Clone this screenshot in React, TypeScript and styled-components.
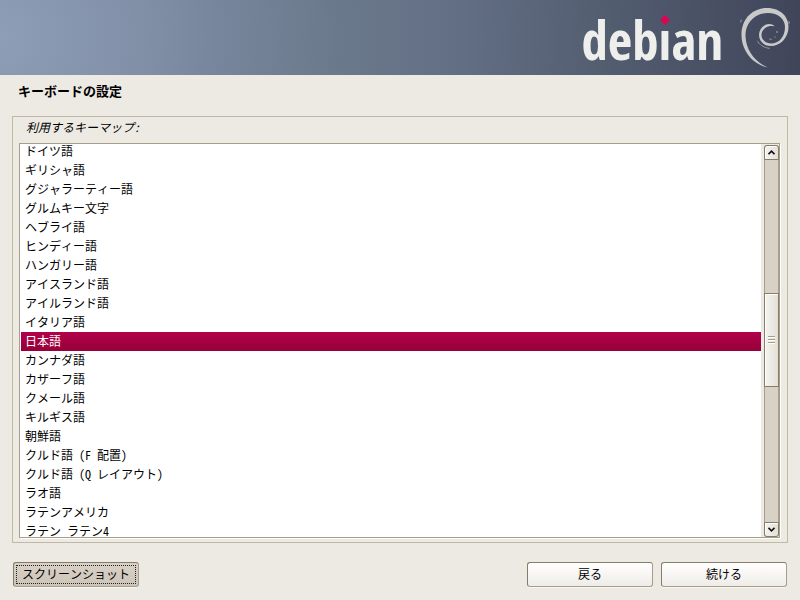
import React, { useLayoutEffect, useRef, useState } from "react";
import styled, { createGlobalStyle, css } from "styled-components";

const GlobalStyle = createGlobalStyle`
  * { box-sizing: border-box; }
  body {
    margin: 0;
    background: #edeae3;
    color: #000;
    font-family: "Noto Sans Mono CJK JP", "Noto Sans CJK JP", sans-serif;
    font-size: 12px;
  }
`;

const Page = styled.div`
  display: flex;
  flex-direction: column;
  height: 100vh;
`;

const Banner = styled.header`
  display: flex;
  flex: none;
  justify-content: flex-end;
  align-items: flex-start;
  gap: 17px;
  height: 75px;
  padding-right: 10px;
  background: radial-gradient(
    circle farthest-side at 0 50%,
    #8e9eb7 0%,
    #8492ab 14%,
    #78869d 27%,
    #6b798c 42%,
    #626e84 58%,
    #545f72 74%,
    #4a5266 87%,
    #40455a 100%
  );
`;

const Wordmark = styled.div`
  position: relative;
  margin-top: 8px;
  color: #eeeeec;
  font: bold 53px/64px "Open Sans Condensed", "Noto Sans ExtraCondensed", "Noto Sans Condensed", "Roboto Condensed", "Noto Sans CJK JP", sans-serif;
`;

const AccentLetter = styled.span`
  position: relative;
  color: transparent;
  background: linear-gradient(transparent 36%, #eeeeec 36%);
  background-clip: text;
`;

const Diamond = styled.svg`
  position: absolute;
  left: 50%;
  top: 12px;
  width: 10px;
  height: 10px;
  margin-left: -5px;
`;

const Swirl = styled.svg`
  flex: none;
  width: 50px;
  height: 62px;
  margin-top: 7px;
`;

const Title = styled.h1`
  flex: none;
  margin: 0;
  padding: 6px 18px 15px;
  font-size: 13px;
  line-height: 20px;
`;

const Panel = styled.section`
  display: flex;
  flex: 1;
  flex-direction: column;
  min-height: 0;
  margin: 0 12px;
  padding: 0 7px 4px 6px;
  border: 1px solid #c0b7a4;
`;

const PanelLabel = styled.h2`
  flex: none;
  margin: 0;
  padding: 0 7px 6px;
  font-size: 12px;
  font-weight: normal;
  font-style: italic;
  line-height: 20px;
`;

const ListFrame = styled.div`
  display: flex;
  flex: 1;
  min-height: 0;
  border: 1px solid #a79d8b;
  box-shadow: 1px 1px #fff;
  background: #edeae3;
`;

const List = styled.ul`
  flex: 1;
  margin: 0;
  padding: 0 0 0 1px;
  overflow: hidden;
  list-style: none;
  background: #fff;
  outline: none;
`;

const Option = styled.li<{ $selected: boolean }>`
  padding: 0 0 2px 4px;
  line-height: 17px;
  white-space: pre;
  cursor: default;
  ${(p) =>
    p.$selected &&
    css`
      color: #fff;
      background: linear-gradient(#b2004a, #960039);
    `}
`;

const Scrollbar = styled.div`
  display: flex;
  flex: none;
  flex-direction: column;
  width: 15px;
  margin: 1px 0 0 3px;
  border: solid #a79d8b;
  border-width: 0 1px;
  border-radius: 3px;
  background: #d8d1c5;
`;

const bevel = css`
  margin: 0 -1px;
  padding: 0;
  border: 1px solid #857c69;
  box-shadow: inset 1px 1px #fff;
  background: linear-gradient(90deg, #f5f4f0, #e3dfd7);
`;

const Stepper = styled.button<{ $end?: boolean }>`
  ${bevel}
  display: flex;
  flex: none;
  align-items: center;
  justify-content: center;
  height: 15px;
  border-radius: ${(p) => (p.$end ? "0 0 3px 3px" : "3px 3px 0 0")};
`;

const Track = styled.div`
  display: grid;
  flex: 1;
  grid-template-rows: 133fr 94fr 135fr;
`;

const Thumb = styled.div`
  ${bevel}
  grid-row: 2;
  display: flex;
  flex-direction: column;
  align-items: center;
  justify-content: center;
  gap: 1px;
`;

const Grip = styled.span`
  width: 7px;
  height: 2px;
  border-top: 1px solid #a79d8b;
  background: #fff;
`;

const Actions = styled.footer`
  display: flex;
  flex: none;
  gap: 8px;
  padding: 19px 13px 13px;
`;

const Button = styled.button<{ $pressed?: boolean }>`
  width: 126px;
  height: 25px;
  padding: 1px 2px 3px;
  border: 1px solid;
  border-color: #857c69 #a79d8b #a79d8b #857c69;
  border-radius: 3px;
  box-shadow: 0 1px #f8f7f4;
  background: linear-gradient(#fff, #efece7);
  color: #000;
  font: inherit;
  line-height: 19px;
  ${(p) =>
    p.$pressed &&
    css`
      margin-right: auto;
      padding: 2px;
      background: linear-gradient(#d9d1c7, #cdc4b8);
    `}
`;

const FocusRing = styled.span`
  display: block;
  padding-bottom: 2px;
  border: 1px dotted #222;
  line-height: 15px;
`;

const keymaps = [
  "ドイツ語",
  "ギリシャ語",
  "グジャラーティー語",
  "グルムキー文字",
  "ヘブライ語",
  "ヒンディー語",
  "ハンガリー語",
  "アイスランド語",
  "アイルランド語",
  "イタリア語",
  "日本語",
  "カンナダ語",
  "カザーフ語",
  "クメール語",
  "キルギス語",
  "朝鮮語",
  "クルド語 (F 配置)",
  "クルド語 (Q レイアウト)",
  "ラオ語",
  "ラテンアメリカ",
  "ラテン ラテン4",
];

function Chevron({ down = false }: { down?: boolean }) {
  return (
    <svg width="7" height="5" viewBox="0 0 7 5" aria-hidden="true">
      <path
        d={down ? "M.5 .8 3.5 3.8 6.5 .8" : "M.5 4.2 3.5 1.2 6.5 4.2"}
        fill="none"
        stroke="#111"
        strokeWidth="1.6"
      />
    </svg>
  );
}

export default function App() {
  const [selected, setSelected] = useState("日本語");
  const list = useRef<HTMLUListElement>(null);

  useLayoutEffect(() => {
    if (list.current) list.current.scrollTop = 2;
  }, []);

  const scroll = (rows: number) => list.current?.scrollBy({ top: rows * 19 });

  return (
    <Page>
      <GlobalStyle />
      <Banner>
        <Wordmark>
          deb
          <AccentLetter>
            i
            <Diamond viewBox="0 0 10 10" aria-hidden="true">
              <path d="M5 0 7 2 8 2 8 3 10 5 8 7 8 8 7 8 5 10 3 8 2 8 2 7 0 5 2 3 2 2 3 2Z" fill="#d70751" />
            </Diamond>
          </AccentLetter>
          an
        </Wordmark>
        <Swirl viewBox="0 0 50 62" role="img" aria-label="Debian">
          <g fill="#c9c9c9">
            <path d="M27.500 60.500C12 57 1.500 43 1.500 28C1.500 12 12 1 27 1C41 1 48.500 10 48.500 20C48.500 31 40 39 31 39C24 39 19 34 19 28C19 21 25 17 29 17C32 17 34 18 34.500 19.500C28 17.500 21.500 22 21.500 28C21.500 33 26 36.500 31 36.500C39 36.500 45 30 45 20C45 12 38 6 28 6C14 6 5 17 5.500 29C6 43 14 54 27.500 60.500Z" />
            <circle cx="37" cy="25" r=".9" opacity=".6" />
            <circle cx="35" cy="30" r=".7" opacity=".6" />
            <path d="M29 31.500l4 .5-3 1ZM17 33l3 4 5 3 5 1-1 1-6-2-5-4ZM0 14l2-2-1 4ZM48 14l2 1-1 3Z" opacity=".6" />
          </g>
        </Swirl>
      </Banner>
      <Title>キーボードの設定</Title>
      <Panel>
        <PanelLabel id="keymap-label">利用するキーマップ:</PanelLabel>
        <ListFrame>
          <List ref={list} role="listbox" aria-labelledby="keymap-label" tabIndex={0}>
            {keymaps.map((name) => (
              <Option
                key={name}
                role="option"
                aria-selected={name === selected}
                $selected={name === selected}
                onClick={() => setSelected(name)}
              >
                {name}
              </Option>
            ))}
          </List>
          <Scrollbar>
            <Stepper type="button" aria-label="上へ" onClick={() => scroll(-1)}>
              <Chevron />
            </Stepper>
            <Track>
              <Thumb>
                <Grip />
                <Grip />
                <Grip />
              </Thumb>
            </Track>
            <Stepper type="button" aria-label="下へ" $end onClick={() => scroll(1)}>
              <Chevron down />
            </Stepper>
          </Scrollbar>
        </ListFrame>
      </Panel>
      <Actions>
        <Button type="button" $pressed>
          <FocusRing>スクリーンショット</FocusRing>
        </Button>
        <Button type="button">戻る</Button>
        <Button type="button">続ける</Button>
      </Actions>
    </Page>
  );
}
